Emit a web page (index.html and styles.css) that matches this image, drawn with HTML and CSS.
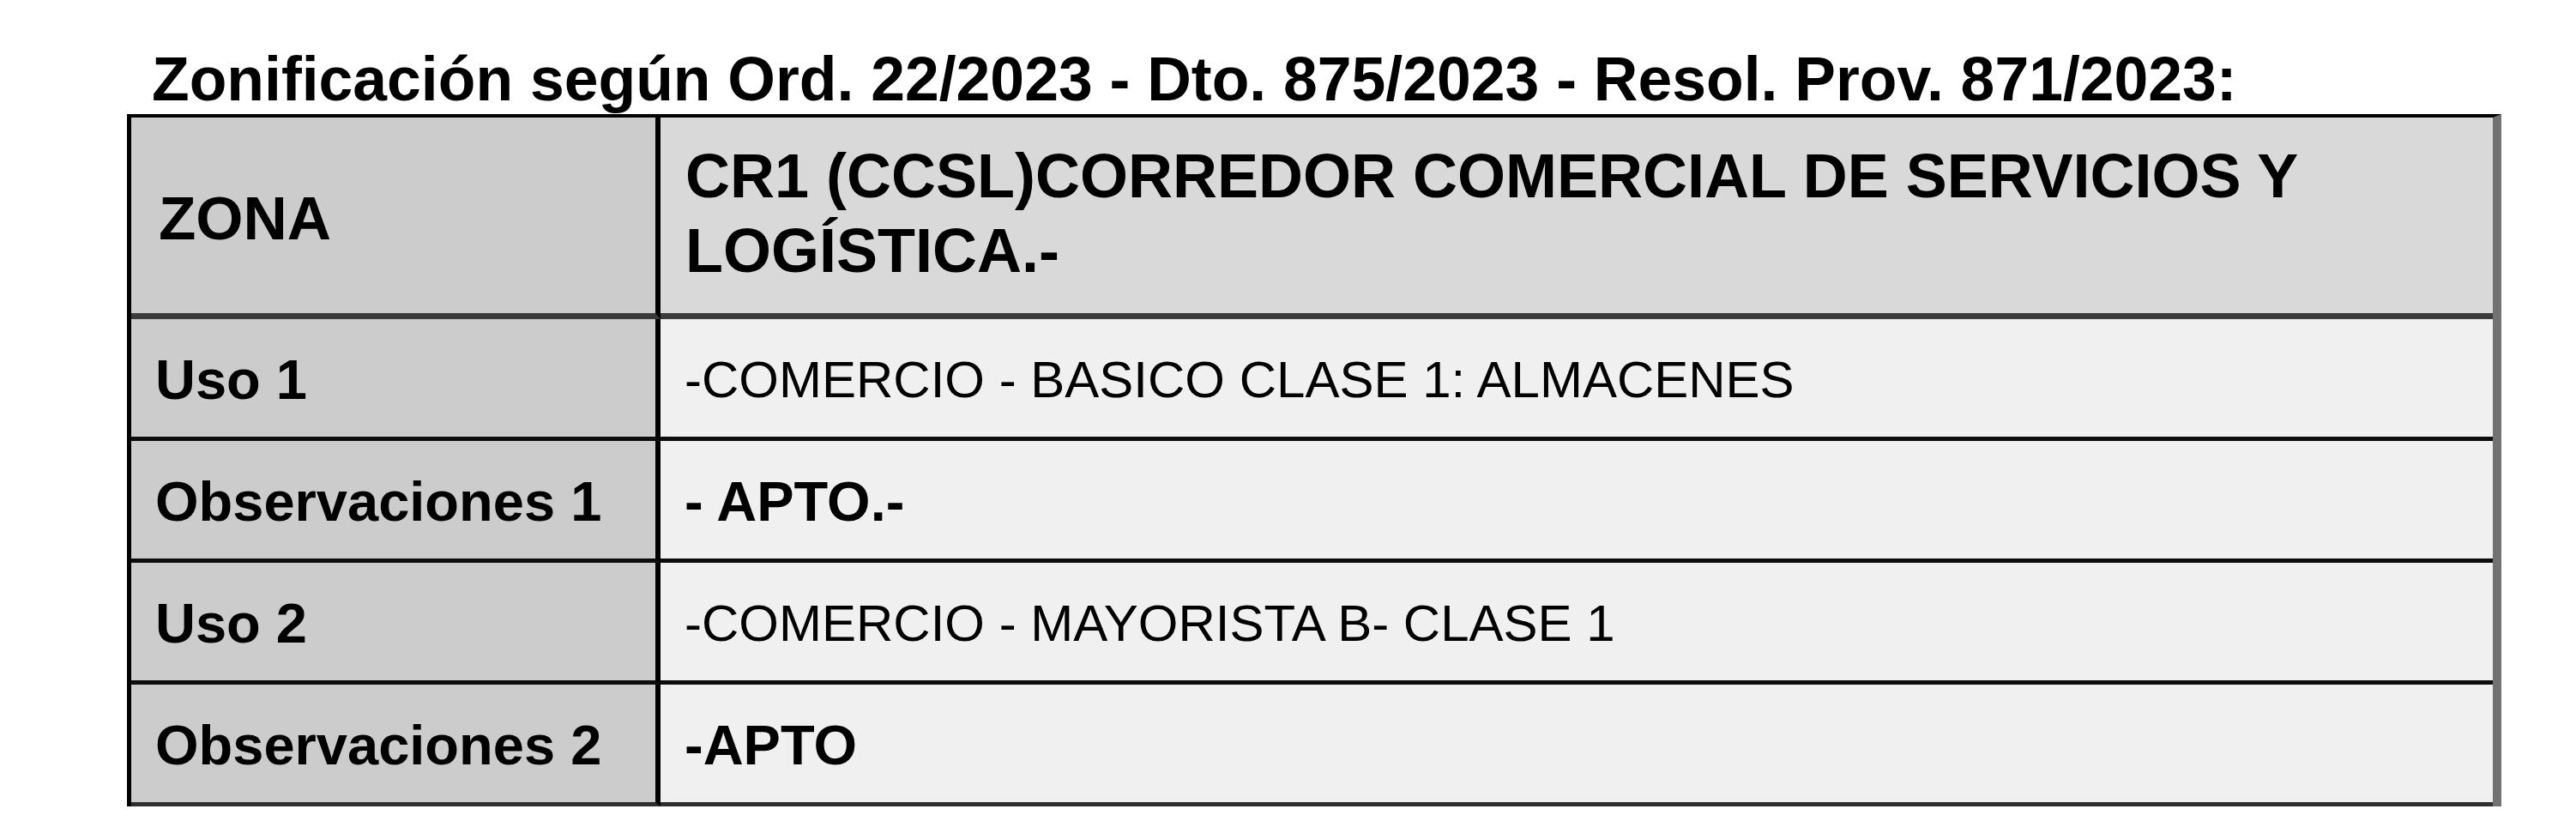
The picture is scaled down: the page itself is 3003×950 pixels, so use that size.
FILE: index.html
```html
<!DOCTYPE html>
<html lang="es">
<head>
<meta charset="utf-8">
<title>Zonificación</title>
<link rel="stylesheet" href="styles.css">
</head>
<body>
<div class="page">
  <h1 class="title">Zonificación según Ord. 22/2023 - Dto. 875/2023 - Resol. Prov. 871/2023:</h1>
  <table class="zona-table">
    <tr class="head-row">
      <th class="label">ZONA</th>
      <th class="value head">CR1 (CCSL)CORREDOR COMERCIAL DE SERVICIOS Y LOGÍSTICA.-</th>
    </tr>
    <tr class="row">
      <td class="label">Uso 1</td>
      <td class="value">-COMERCIO - BASICO CLASE 1: ALMACENES</td>
    </tr>
    <tr class="row">
      <td class="label">Observaciones 1</td>
      <td class="value strong">- APTO.-</td>
    </tr>
    <tr class="row">
      <td class="label">Uso 2</td>
      <td class="value">-COMERCIO - MAYORISTA B- CLASE 1</td>
    </tr>
    <tr class="row last">
      <td class="label">Observaciones 2</td>
      <td class="value strong">-APTO</td>
    </tr>
  </table>
</div>
</body>
</html>
```

FILE: styles.css
```css
html, body {
  margin: 0;
  padding: 0;
  background: #ffffff;
}

body {
  font-family: "Liberation Sans", Arial, sans-serif;
  color: #000000;
}

.page {
  padding: 52px 0 0 148px;
}

.title {
  margin: 0 0 1px 29px;
  font-size: 71.5px;
  font-weight: bold;
  line-height: 80px;
  white-space: nowrap;
}

.zona-table {
  border-collapse: separate;
  border-spacing: 0;
  width: 2768px;
  table-layout: fixed;
  border-top: 4px solid #000000;
  border-left: 5px solid #000000;
  border-right: 10px solid #727272;
}

.zona-table th,
.zona-table td {
  padding: 0 28px;
  text-align: left;
  vertical-align: middle;
  border-bottom: 5px solid #0d0d0d;
}

.label {
  width: 551px;
  background: #cccccc;
  border-right: 6px solid #000000;
  font-size: 65px;
  font-weight: bold;
  line-height: 74px;
  white-space: nowrap;
}

.value {
  background: #f0f0f0;
  font-size: 60px;
  font-weight: normal;
  line-height: 70px;
}

.value.strong {
  font-size: 65px;
  font-weight: bold;
  line-height: 74px;
}

.head-row th {
  height: 222px;
  border-bottom: 7px solid #3b3b3b;
  font-size: 72px;
  font-weight: bold;
  line-height: 87px;
  padding-bottom: 5px;
}

.head-row .label {
  font-size: 71px;
  padding-left: 32px;
  padding-top: 6px;
  padding-bottom: 0;
}

.value.head {
  background: #d9d9d9;
  padding-left: 29px;
  padding-top: 0;
}

.row td {
  height: 133px;
  padding-top: 4px;
}

.row.last td {
  border-bottom-color: #2e2e2e;
}
```
